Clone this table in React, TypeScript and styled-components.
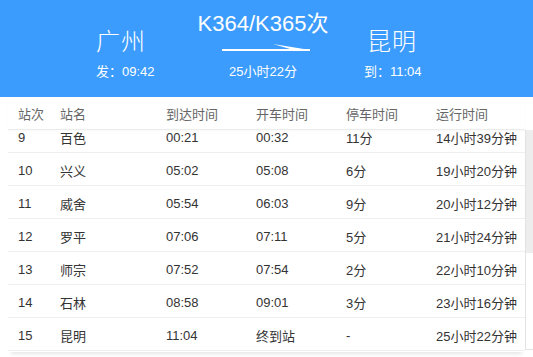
import React from "react";
import styled, { createGlobalStyle } from "styled-components";

const Global = createGlobalStyle`
  html, body { margin: 0; padding: 0; background: #fff; }
  body {
    font-family: "Liberation Sans", "Noto Sans CJK SC", sans-serif;
    width: 533px;
    height: 357px;
    overflow: hidden;
  }
`;

const Page = styled.div`
  width: 533px;
  display: flex;
  flex-direction: column;
`;

const Header = styled.header`
  height: 97px;
  background: #3c9cfd;
  color: #fff;
  display: flex;
  align-items: flex-start;
  padding: 11px 0 0 96px;
  box-sizing: border-box;
`;

const EndBlock = styled.div<{ $width: number }>`
  width: ${(p) => p.$width}px;
  padding-top: 17px;
  display: flex;
  flex-direction: column;
  gap: 12px;
`;

const City = styled.div<{ $indent?: number }>`
  font-family: "Noto Sans CJK SC", sans-serif;
  font-weight: 300;
  font-size: 24px;
  line-height: 24px;
  letter-spacing: 1px;
  padding-left: ${(p) => p.$indent ?? 0}px;
`;

const SubText = styled.div`
  font-size: 13px;
  line-height: 16px;
`;

const CenterBlock = styled.div`
  width: 134px;
  margin-right: 34px;
  display: flex;
  flex-direction: column;
  align-items: center;
`;

const Title = styled.div`
  font-size: 22px;
  line-height: 25px;
  white-space: nowrap;
`;

const Arrow = styled.svg`
  display: block;
  margin: 8px 0 0 6px;
`;

const Duration = styled(SubText)`
  margin-top: 12px;
`;

const cols = "42px 106px 90px 90px 90px 1fr";

const HeadRow = styled.div`
  margin: 0 8px;
  height: 33px;
  display: grid;
  grid-template-columns: ${cols};
  align-items: center;
  border-bottom: 1px solid #ececec;
  box-shadow: 0 1px 2px rgba(0, 0, 0, 0.03);
  box-sizing: border-box;
  color: #666;
  font-size: 13px;
`;

const Cell = styled.div`
  padding-left: 10px;
  white-space: nowrap;
`;

const Body = styled.div`
  display: flex;
  align-items: flex-start;
`;

const Viewport = styled.div`
  margin-left: 8px;
  flex: 1;
  height: 222px;
  overflow: hidden;
  box-shadow: 0 5px 4px -3px rgba(0, 0, 0, 0.1);
`;

const List = styled.div<{ $offset: number }>`
  margin-top: ${(p) => -p.$offset}px;
`;

const Row = styled.div`
  height: 33px;
  display: grid;
  grid-template-columns: ${cols};
  align-items: center;
  border-bottom: 1px solid #efefef;
  box-sizing: border-box;
  color: #333;
  font-size: 13px;
  padding-top: 2px;
`;

const Track = styled.div`
  width: 8px;
  height: 220px;
  border-left: 1px solid #e3e3e3;
  border-bottom: 1px solid #e3e3e3;
  box-sizing: border-box;
`;

const Thumb = styled.div`
  height: 123px;
  background: #ededed;
`;

const rows = [
  ["9", "百色", "00:21", "00:32", "11分", "14小时39分钟"],
  ["10", "兴义", "05:02", "05:08", "6分", "19小时20分钟"],
  ["11", "威舍", "05:54", "06:03", "9分", "20小时12分钟"],
  ["12", "罗平", "07:06", "07:11", "5分", "21小时24分钟"],
  ["13", "师宗", "07:52", "07:54", "2分", "22小时10分钟"],
  ["14", "石林", "08:58", "09:01", "3分", "23小时16分钟"],
  ["15", "昆明", "11:04", "终到站", "-", "25小时22分钟"],
];

const heads = ["站次", "站名", "到达时间", "开车时间", "停车时间", "运行时间"];

export default function App() {
  return (
    <Page>
      <Global />
      <Header>
        <EndBlock $width={100}>
          <City>广州</City>
          <SubText>发：09:42</SubText>
        </EndBlock>
        <CenterBlock>
          <Title>K364/K365次</Title>
          <Arrow width="88" height="8" viewBox="0 0 88 8">
            <rect x="0" y="5" width="88" height="2" fill="#fff" />
            <polygon points="51,0 88,6 88,7 68,5" fill="#fff" />
          </Arrow>
          <Duration>25小时22分</Duration>
        </CenterBlock>
        <EndBlock $width={100}>
          <City $indent={3}>昆明</City>
          <SubText>到：11:04</SubText>
        </EndBlock>
      </Header>
      <HeadRow>
        {heads.map((h) => (
          <Cell key={h}>{h}</Cell>
        ))}
      </HeadRow>
      <Body>
        <Viewport>
          <List $offset={10}>
            {rows.map((r) => (
              <Row key={r[0]}>
                {r.map((c, i) => (
                  <Cell key={i}>{c}</Cell>
                ))}
              </Row>
            ))}
          </List>
        </Viewport>
        <Track>
          <Thumb />
        </Track>
      </Body>
    </Page>
  );
}
